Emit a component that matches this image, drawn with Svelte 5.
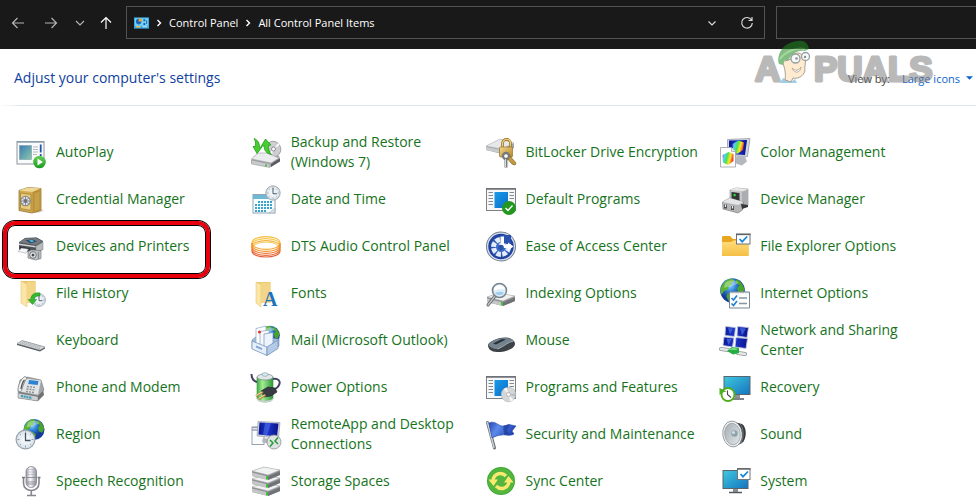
<script>
  /**
   * Control Panel — "All Control Panel Items" in the large icons view.
   */
  const items = [
    { name: 'AutoPlay', icon: 'autoplay' },
    { name: 'Backup and Restore (Windows 7)', icon: 'backup' },
    { name: 'BitLocker Drive Encryption', icon: 'bitlocker' },
    { name: 'Color Management', icon: 'color' },
    { name: 'Credential Manager', icon: 'credential' },
    { name: 'Date and Time', icon: 'date' },
    { name: 'Default Programs', icon: 'defaults' },
    { name: 'Device Manager', icon: 'device' },
    { name: 'Devices and Printers', icon: 'printer', marked: true },
    { name: 'DTS Audio Control Panel', icon: 'dts' },
    { name: 'Ease of Access Center', icon: 'ease' },
    { name: 'File Explorer Options', icon: 'explorer' },
    { name: 'File History', icon: 'history' },
    { name: 'Fonts', icon: 'fonts' },
    { name: 'Indexing Options', icon: 'indexing' },
    { name: 'Internet Options', icon: 'internet' },
    { name: 'Keyboard', icon: 'keyboard' },
    { name: 'Mail (Microsoft Outlook)', icon: 'mail' },
    { name: 'Mouse', icon: 'mouse' },
    { name: 'Network and Sharing Center', icon: 'network' },
    { name: 'Phone and Modem', icon: 'phone' },
    { name: 'Power Options', icon: 'power' },
    { name: 'Programs and Features', icon: 'programs' },
    { name: 'Recovery', icon: 'recovery' },
    { name: 'Region', icon: 'region' },
    { name: 'RemoteApp and Desktop Connections', icon: 'remote' },
    { name: 'Security and Maintenance', icon: 'security' },
    { name: 'Sound', icon: 'sound' },
    { name: 'Speech Recognition', icon: 'speech' },
    { name: 'Storage Spaces', icon: 'storage' },
    { name: 'Sync Center', icon: 'sync' },
    { name: 'System', icon: 'system' }
  ]

  let view = $state('Large icons')
  let query = $state('')
</script>

{#snippet globe(cx, cy, r)}
  <g transform="translate({cx} {cy}) scale({r / 10})">
    <circle r="10" fill="url(#g-globe)" />
    <path d="M-8-5C-6-8-3-10 0-9.600l2 2-3 1 1 2-3 1-1 3-3 1-2 3c-1-3-1-6 1-8z" fill="#5cb531" />
    <path d="M3-9c4 1 6 5 6.800 8l-2 4-3-1-1-4 2-2-3-2zM-4 2l4 1 2 2-2 4-3 0-2-4z" fill="#49a32c" />
    <path d="M-6-6C-3-9 3-9 5-6 2-4-4-3-7-2z" fill="#fff" opacity="0.35" />
  </g>
{/snippet}

{#snippet clock(cx, cy, r)}
  <g transform="translate({cx} {cy}) scale({r / 10})">
    <circle r="9.400" fill="url(#g-clock)" stroke="#9aa3ab" stroke-width="1.200" />
    <path d="M0-8v2M0 6v2M-8 0h2M6 0h2M-5.600-5.600l1 1M4.600 4.600l1 1M-5.600 5.600l1-1M4.600-4.600l1-1" stroke="#8c969e" stroke-width="0.900" />
    <path d="M0-6.500V1h5" fill="none" stroke="#3f5365" stroke-width="1.300" />
  </g>
{/snippet}

{#snippet programWindow()}
  <rect x="1.500" y="4.500" width="29" height="22" fill="#f7f7f7" stroke="#7d8186" />
  <path d="M1 5h30" stroke="#6b6f74" stroke-width="1.500" />
  <path d="M3.500 8.500h4.500M3.500 11.500h4.500M3.500 14.500h4.500M3.500 17.500h4.500M3.500 20.500h4.500M24.500 8.500h4.500M24.500 11.500h4.500M24.500 14.500h4.500" stroke="#858a90" stroke-width="1" />
  <rect x="9.500" y="8" width="13.500" height="16" fill="url(#g-azure)" />
{/snippet}

{#snippet drive(y)}
  <path d="M2 {y + 4}L14 {y}l16 3v5l-12 5L2 {y + 9}z" fill="#8d8f91" />
  <path d="M2 {y + 4}L14 {y}l16 3-12 5z" fill="#f1f2f2" stroke="#a8abad" stroke-width="0.500" />
  <path d="M2 {y + 5.5}l16 4v3.500L2 {y + 9}z" fill="#c4c6c8" />
  <path d="M18 {y + 9.5}l12-5v3.500l-12 5z" fill="#707376" />
  <path d="M16 {y + 9}l2 .5v3l-2-.5z" fill="#35c52c" />
{/snippet}

{#snippet pcWithTick()}
  <rect x="18.500" y="2.500" width="12.500" height="11" fill="#fff" stroke="#72777b" />
  <path d="M18 3h13.500" stroke="#5f6468" stroke-width="1.400" />
  <path d="m21.500 8 2.500 2.700 5-5.200" fill="none" stroke="#1686d9" stroke-width="1.700" />
{/snippet}

{#snippet picture(icon)}
  <svg class="icon" viewBox="0 0 32 32" aria-hidden="true">
    {#if icon === 'autoplay'}
      <rect x="2" y="4.500" width="27" height="22.500" fill="#fafbfc" stroke="#8e959c" />
      <path d="M2 5h27" stroke="#8fa0b0" stroke-width="1.500" />
      <rect x="4.500" y="8.500" width="12" height="14" fill="url(#g-teal)" stroke="#7c9dad" stroke-width="0.600" />
      <path d="M18 10h5M18 12.500h5M18 15h5M18 17.500h4" stroke="#b5b9bd" stroke-width="1" />
      <path d="M25.700 7.500v8M25.700 17v2" stroke="#1d58ad" stroke-width="1.800" />
      <circle cx="24.500" cy="25" r="6.300" fill="url(#g-green)" />
      <path d="M22.500 21.500v7l5.500-3.500z" fill="#fff" />
    {:else if icon === 'backup'}
      <path d="M1.500 22 8 16h17l5 4-9 10L1.500 26z" fill="#a6a9ac" />
      <ellipse cx="23.500" cy="12" rx="7.200" ry="7.800" transform="rotate(-25 23.500 12)" fill="#cfcfd3" stroke="#8e8f93" stroke-width="0.700" />
      <path d="m23.500 12 6-4-1-2zM23.500 12l-5 5 3 2z" fill="#fff" />
      <circle cx="23.500" cy="12" r="2" fill="#fff" stroke="#77797d" stroke-width="0.800" />
      <path d="M1.500 22 8 16h9l12 5-8 5z" fill="#ecedee" stroke="#9b9ea2" stroke-width="0.600" />
      <path d="M1.500 23 20 27v3.500L1.500 27z" fill="#c8cacc" stroke="#8a8d90" stroke-width="0.500" />
      <path d="m21 27 9-6v3.500L21 30z" fill="#595b5e" />
      <path d="M16 27.500v2" stroke="#21b526" stroke-width="1.500" />
      <path d="M4 1.500C8 3 9.500 6 9.500 10H12l-5 6.500L3 9.500h2.300C5.800 6 5.500 4 4 1.500z" fill="#46cf2c" stroke="#198f19" stroke-width="0.700" />
      <path d="m15.500 2 5.500 6-2.500.5c-.5 3 .5 6 3 9-5-1-7.500-4-7.300-8.500l-3 .3z" fill="#46cf2c" stroke="#198f19" stroke-width="0.700" />
    {:else if icon === 'bitlocker'}
      <path d="M1 9 15 2l14 4v5l-12 6L1 13z" fill="#a1a3a5" />
      <path d="M1 9 15 2l14 4-12 6z" fill="#e6e7e8" stroke="#b7b9bb" stroke-width="0.500" />
      <path d="m1 10 16 3v3.500L1 13z" fill="#c8cacc" />
      <path d="M17.500 12V6.500c0-5.500 8-5.500 8 0V11" fill="none" stroke="#8c6a22" stroke-width="2.600" />
      <path d="M17.500 12V6.500c0-5.500 8-5.500 8 0V11" fill="none" stroke="#edcb76" stroke-width="1.300" />
      <rect x="14.500" y="10" width="13" height="10" rx="1" fill="url(#g-gold)" stroke="#8a6519" stroke-width="0.600" />
      <path d="m24 18 7 8-1 2-3-1-6-7z" fill="#c39a3d" stroke="#80601c" stroke-width="0.700" />
      <circle cx="21" cy="19" r="3" fill="#fff" stroke="#77797b" stroke-width="2.300" />
      <path d="M21 21.500v9" stroke="#77797b" stroke-width="3" />
      <path d="M20.500 22v8M22 25h2M22 28h1.500" stroke="#d5d7d8" stroke-width="1" />
    {:else if icon === 'color'}
      <path d="m8.500 2.500 22.500-1-2.500 18-20-1z" fill="#d3d7df" stroke="#8991a4" stroke-width="0.700" />
      <path d="m10 3.500 18-.6-2 15-16-1z" fill="url(#g-screen)" />
      <path d="m13.500 7 6-3.500 5.500 2-1 7.500-6 4-4-3z" fill="url(#g-rainbow)" />
      <path d="m18 19 8 .5 2 5-5 4-9-3z" fill="#b4b8bf" />
      <path d="M1.500 10.500h11l4 4v15.500h-15z" fill="#fff" stroke="#9a9ea6" stroke-width="0.800" />
      <path d="M12.500 10.500v4h4" fill="#e7e9ec" stroke="#9a9ea6" stroke-width="0.700" />
      <path d="m3.500 18 6-3 5 2v7l-5.500 4-5-2.500z" fill="url(#g-rainbow)" />
    {:else if icon === 'credential'}
      <path d="M14 29h9l6-2-5-4z" fill="#c9c9c9" opacity="0.600" />
      <path d="m4 6.500 9-3 13 1v22L17 29 4 26.500z" fill="#d3ac51" stroke="#84651f" stroke-width="0.700" />
      <path d="m4 6.500 9-3 13 1-8.500 3.500z" fill="#efd795" />
      <path d="m17.500 8 8.500-3.500v22L17.500 29z" fill="#b98f38" />
      <path d="m19.500 9.500 5-2V25l-5 2z" fill="#c7a04a" />
      <path d="m5.500 9 10.500 1.500v16L5.500 24.500z" fill="#e8cb7d" stroke="#9f7a2b" stroke-width="0.700" />
      <circle cx="10.500" cy="17" r="5.300" fill="#808489" />
      <circle cx="10.500" cy="17" r="4.200" fill="#dfe1e3" />
      <circle cx="10.500" cy="17" r="2" fill="#7d8185" />
      <path d="M10.500 12.500v9M6 17h9M7.500 14l6 6M7.500 20l6-6" stroke="#6a6d71" stroke-width="0.700" />
    {:else if icon === 'date'}
      <rect x="3" y="10.500" width="22" height="18.500" fill="#fafdff" stroke="#93a6b5" />
      <path d="M3 11h22v4H3z" fill="#6ebad4" />
      <g fill="none" stroke="#37a5ca" stroke-width="1.900" stroke-dasharray="2 1">
        <path d="M8 18h15M5 21h18M5 24h18M5 27h12" />
      </g>
      <path d="m19 29 6-5v5z" fill="#d6dde2" stroke="#93a6b5" stroke-width="0.500" />
      {@render clock(23, 9, 7.6)}
    {:else if icon === 'defaults'}
      {@render programWindow()}
      <circle cx="24" cy="24" r="7" fill="#239620" />
      <path d="m20.500 24 2.500 2.500 4.500-5" fill="none" stroke="#fff" stroke-width="1.400" />
    {:else if icon === 'device'}
      <path d="m11 6 6-2 12 1v16l-6 3-12-4z" fill="#c6c8ca" stroke="#8b8d90" stroke-width="0.600" />
      <path d="m11 6 6-2 12 1-5 2z" fill="#e9eaea" />
      <path d="m12.500 8 8 1v8l-8-2z" fill="#313335" />
      <path d="m23 8 6-2.500V21l-6 2.500z" fill="#abadb0" />
      <rect x="14.500" y="10" width="2.200" height="2.200" fill="#26df37" />
      <path d="m3.500 18 7-4 14 4-1 8-4.500 3-15-4z" fill="#b3b5b7" stroke="#727476" stroke-width="0.600" />
      <path d="m3.500 18 7-4 14 4-5.500 3z" fill="#e4e5e6" />
      <path d="M6.500 20.500v4M13.500 22v4" stroke="#4d4f51" stroke-width="3" />
      <path d="M6.500 20.500v2.500M13.500 22v2.500" stroke="#eee" stroke-width="1.200" />
      <path d="m22 20 7 1v2l-6 2z" fill="#343638" />
    {:else if icon === 'printer'}
      <path d="m4 12 6-4.500 12-.7 6 3.700v8L21 22 4 19z" fill="#4d5257" />
      <path d="m4 11.500 6-4.200 11-.6 7 3.600-7 4.200z" fill="#757b80" stroke="#4c5155" stroke-width="0.600" />
      <path d="m10.500 9.300 7-.9 4.500 2-6.500 1.800z" fill="#27455c" />
      <path d="m13.500 9.600 3.500-.5 2.500 1.200-3 .9z" fill="#54b8e6" />
      <path d="m21 15 7-4v7.500L21 21z" fill="#b6babd" stroke="#7d8185" stroke-width="0.500" />
      <path d="m4 12.500 16.500 2.500v1.500L4 14z" fill="#d4d7d9" />
      <path d="m5 15.500 10 2v3.500L5 19z" fill="#26292c" />
      <path d="m6.500 17 7 1.200-2.500 4-8-1.700z" fill="#f4f5f6" stroke="#989da1" stroke-width="0.500" />
      <path d="m13 20.500 3-1.500h3l7 1v7.500L21 29l-8-2z" fill="#c3c6c9" stroke="#65696d" stroke-width="0.600" />
      <circle cx="18" cy="24" r="3.300" fill="#f1f2f3" stroke="#5d6165" stroke-width="0.900" />
      <circle cx="18" cy="24" r="1.500" fill="#45494d" />
      <path d="M23.500 21v7" stroke="#8a8e91" stroke-width="1.500" />
    {:else if icon === 'dts'}
      <g fill="none" stroke-width="1.200">
        <path d="M2 12c0-8.500 28-8.500 28 0" stroke="#f6bc3a" />
        <path d="M2 14c0-8.500 28-8.500 28 0" stroke="#f8c74c" />
        <path d="M2 16c0-8.500 28-8.500 28 0" stroke="#f5b13b" />
        <path d="M3 16.500c2-7 24-7 26 0" stroke="#f8cd6c" />
        <path d="M2 12c0 8.500 28 8.500 28 0" stroke="#f4ab35" />
        <path d="M2 14c0 8.500 28 8.500 28 0" stroke="#f09535" />
        <path d="M2 16c0 8.500 28 8.500 28 0" stroke="#ed7e38" />
        <path d="M2 18c0 8.500 28 8.500 28 0" stroke="#ea6b38" />
        <path d="M2 20c0 8 28 8 28 0" stroke="#e65b38" />
        <path d="M2 12v8M30 12v8" stroke="#ef8d32" />
      </g>
    {:else if icon === 'ease'}
      <circle cx="16" cy="15.500" r="15" fill="#727d91" />
      <circle cx="16" cy="15.500" r="14" fill="#d7dfec" />
      <circle cx="16" cy="15.500" r="12.700" fill="url(#g-ease)" />
      <circle cx="16" cy="16" r="7.500" fill="none" stroke="#e4ecfb" stroke-width="5" stroke-dasharray="4.500 1.400" />
      <path d="M16.500 4H26v9H16.500z" fill="#2952af" />
      <path d="M15.500 5.500h3.500v7h2l-3.700 4.500-3.800-4.500h2z" fill="#fff" />
      <path d="M18 14h5v-2.500l5.500 4-5.500 4V17h-5z" fill="#fff" />
      <circle cx="16" cy="16.500" r="2.800" fill="#2952af" />
    {:else if icon === 'explorer'}
      <path d="M3 6.500c0-1 .5-1.500 1.500-1.500H11l3 3h14c1 0 1.500.5 1.500 1.500V24c0 .700-.5 1-1 1H4c-.6 0-1-.4-1-1z" fill="#e8a620" />
      <path d="M3 11h9l2.500-1.500H29.500V24c0 .6-.4 1-1 1H4c-.6 0-1-.4-1-1z" fill="url(#g-folder)" />
      <rect x="17.500" y="3" width="13.500" height="10" fill="#fff" stroke="#6f757b" />
      <path d="M17 3.500h14.500" stroke="#5f6468" stroke-width="1.300" />
      <path d="m20.500 8 2.700 2.700 5-5.200" fill="none" stroke="#1686d9" stroke-width="1.700" />
    {:else if icon === 'history'}
      <path d="M6 3h14.500v22H6z" fill="#e9c66b" />
      <path d="m6 3 6 3v23l-6-4z" fill="#fbe6a5" stroke="#dfbf69" stroke-width="0.500" />
      <path d="M12 4h8.500v21H12z" fill="#f2d586" />
      {@render clock(24, 22, 6.8)}
      <path d="M25 15c-6-1-9 2-9.300 6.500h-2.500l4.300 5 4-5h-2.300c.3-2.500 2.300-4 5.800-3.500z" fill="#35b933" stroke="#14861c" stroke-width="0.500" />
    {:else if icon === 'fonts'}
      <path d="M6 4h14.500v21H6z" fill="#ecca72" />
      <path d="m6 4 5 2.500V29l-5-4z" fill="#fbe6a5" stroke="#dfbf69" stroke-width="0.500" />
      <path d="M11 5h9.500v20H11z" fill="#f2d586" />
      <text x="13" y="28" class="font-letter">A</text>
    {:else if icon === 'indexing'}
      {@render drive(15)}
      <path d="m10 18-7 9" stroke="#5b6166" stroke-width="3" stroke-linecap="round" />
      <path d="m10 18-7 9" stroke="#c5cacd" stroke-width="1.300" stroke-linecap="round" />
      <circle cx="14.500" cy="12.500" r="7" fill="#d9ecfa" fill-opacity="0.900" stroke="#7b8389" stroke-width="1.600" />
      <path d="M9 11c2-5 9-5 11 0-3 1-7-1-11 2z" fill="#fff" />
      <path d="M10 15c2 3 7 3 9 0-3-2-6-1-9 0z" fill="#a3cdec" />
    {:else if icon === 'internet'}
      {@render globe(13.500, 12.500, 12.300)}
      <path d="M10.500 14h20v16h-20z" fill="#fcfdfd" stroke="#7b8690" />
      <path d="M11 14.500h19" stroke="#a8b2ba" stroke-width="1.500" stroke-dasharray="1.500 1" />
      <path d="M20 20h8M20 25.500h8" stroke="#8995a0" stroke-width="1.300" />
      <path d="m12.500 20 2 2 3.500-4.500M12.500 25.500l2 2L18 23" fill="none" stroke="#207fd0" stroke-width="1.600" />
    {:else if icon === 'keyboard'}
      <path d="m2 18.500 5-3 23 6.500v1.500L25 26.500 2 20z" fill="#52575b" />
      <path d="m2 18.500 5-3 23 6.500-5 3z" fill="#d9dcde" stroke="#9ba0a4" stroke-width="0.500" />
      <path d="m5 18 20 5.500M6.500 17 26 22.300M8 16l20 5.500" stroke="#9a9fa4" stroke-width="0.800" stroke-dasharray="1.500 0.700" />
    {:else if icon === 'mail'}
      {@render globe(20, 10.500, 9.800)}
      <path d="m2 15 5-4 22 3v7l-12 9L2 23z" fill="#a4bddc" stroke="#6282ac" stroke-width="0.500" />
      <path d="M6 3.500 16 1v17L6 20z" fill="#fff" stroke="#8aa5c7" stroke-width="0.700" />
      <path d="m10 6.500 9-1.500v16l-9 1z" fill="#f6f9fd" stroke="#8aa5c7" stroke-width="0.700" />
      <path d="m14 9 9-1.500V22l-9 1z" fill="#eef4fb" stroke="#7893b8" stroke-width="0.700" />
      <circle cx="9.500" cy="7" r="1.600" fill="#e33a2c" />
      <path d="m2 16 15 6v8.500L2 24z" fill="#e5effa" stroke="#6989b4" stroke-width="0.700" />
      <path d="m17 22 11-7v8.500L17 30.500z" fill="#b4cbe7" stroke="#6989b4" stroke-width="0.700" />
      <path d="m6 20.500 6 2.500v2l-6-2.500z" fill="#7fa4d5" />
    {:else if icon === 'mouse'}
      <path d="M3 20c0-3 10-8 18-7.500 5 .3 9 3 9 6.500 0 4-8 8-18 8-6 0-9-3-9-7z" fill="#3d4247" />
      <path d="M3.500 19.500c1-3 10-7 17.500-6.500 4 .3 7 1.500 7.500 3-5 0-9 5-16 8-4 0-9-2-9-4.500z" fill="#75838f" />
      <path d="m8 18.500 9-4.500 4 .500-10 5z" fill="#29323b" />
      <path d="M12.500 24c6-2 10-7 16-8" stroke="#cbd4dc" stroke-width="0.700" fill="none" />
    {:else if icon === 'network'}
      <g fill="url(#g-screen)" stroke="#bdc6db" stroke-width="0.900">
        <path d="m6.500 1.500 10 1-1 9-9.500-1zM18.500 1.500l11 1-1.500 10-10-1.500zM5 12l10 1-1.500 9-9.500-1.500zM17 12.500l11.500 1-1.500 10-11-1.500z" />
      </g>
      <path d="m9 3 5 .5-3 6zM21 3l6 .5-4 7zM7.500 13.500l5 .5-3 6z" fill="#5d80ee" opacity="0.600" />
      <path d="m2 24 7 1M19 28l7 1" stroke="#8f9698" stroke-width="4" stroke-linecap="round" />
      <path d="m2 24 7 1M19 28l7 1" stroke="#e3e8e6" stroke-width="2.500" stroke-linecap="round" />
      <path d="m8 26 5-4 7 1v5l-6 1.500z" fill="#28ad45" />
      <path d="m10 25 4-2.500 5 1.500-2 1z" fill="#75dc82" />
    {:else if icon === 'phone'}
      <path d="m3 21 4-5 21 1 1 6-6 6-20-3z" fill="#6f7376" />
      <path d="m3 21 20 3.500V29L3 26z" fill="#ced0d2" stroke="#777" stroke-width="0.500" />
      <path d="m6 24 11 2" stroke="#319ab8" stroke-width="2" stroke-dasharray="2 0.700" />
      <path d="m5 8 7-3 14 3 3 10-6 6-20-4z" fill="#a4a7aa" stroke="#74787b" stroke-width="0.600" />
      <path d="m9 6.500 17 2-3 14-18-3z" fill="#e2e4e5" />
      <path d="m14 8 9.500 1-.8 4-9.500-1z" fill="#2d83d2" />
      <path d="m12 14.500 9 1M11.500 17l9 1M11 19.500l8 1" stroke="#8b8f93" stroke-width="1.400" stroke-dasharray="2 1" />
      <path d="M10 4.500c-3 1-7 8-7 13 0 2 2 3 3.500 1C8 14 9 10 12 6z" fill="#eff0f1" stroke="#777b7e" stroke-width="0.800" />
      <path d="M9.500 8c-2 2-3 6-3.500 9" stroke="#55595c" fill="none" stroke-width="1.400" />
    {:else if icon === 'power'}
      <path d="M7 5v22c2 4 14 4 16 0V5z" fill="url(#g-battery)" stroke="#3c963d" stroke-width="0.600" />
      <ellipse cx="15" cy="5" rx="8" ry="3" fill="#e2e7e9" stroke="#798589" stroke-width="0.700" />
      <ellipse cx="15" cy="2.500" rx="3" ry="1.800" fill="#d2edf7" stroke="#84959d" stroke-width="0.600" />
      <path d="M7 26c2 3.500 14 3.500 16 0v2c-2 3-14 3-16 0z" fill="#c9d0cf" />
      <path d="M1.500 2c0 5 2 7 5.500 8M23 7c5-1 8 2 6 6-1 3-4 4-6 5" fill="none" stroke="#434267" stroke-width="2" />
      <path d="m11 19 7-4 7 1 2 4-6 4-7 1z" fill="#393b43" stroke="#1d1e23" stroke-width="0.600" />
      <path d="m13 20-7 4M15.500 23l-7 4" stroke="#ad8e4b" stroke-width="2.500" />
      <path d="m12 20-6 3.500M14.500 23l-6 3.500" stroke="#f3e3ac" stroke-width="1" />
    {:else if icon === 'programs'}
      {@render programWindow()}
      <circle cx="23.500" cy="22.500" r="7.300" fill="#d4d6d8" stroke="#a3a6a9" stroke-width="0.500" />
      <path d="m23.500 22.500-5-5.500 3-1.500zM23.500 22.500l5 5.500-3 1.500z" fill="#f8f8f8" />
      <path d="m23.500 22.500 7-1v3z" fill="#b9bcbf" />
      <circle cx="23.500" cy="22.500" r="2" fill="#fff" stroke="#9b9ea1" stroke-width="0.700" />
    {:else if icon === 'recovery'}
      <rect x="5" y="4.500" width="26" height="18" fill="url(#g-monitor)" stroke="#5c646b" />
      <path d="M16 23h5v3h-5z" fill="#8b9095" />
      <path d="M13 27h12" stroke="#55595e" stroke-width="1.500" />
      <circle cx="9" cy="22.500" r="6.500" fill="#fff" stroke="#51ae21" stroke-width="2" />
      <path d="M.5 16v7l3-2.500 4-1z" fill="#51ae21" />
      <path d="M8.500 18.500v4l3.500 3" fill="none" stroke="#44494d" stroke-width="1.100" />
    {:else if icon === 'region'}
      {@render globe(19, 10.500, 10.500)}
      {@render clock(10.500, 20.500, 10)}
    {:else if icon === 'remote'}
      <rect x="2" y="8" width="12" height="17.500" fill="#fbfcfd" stroke="#9aa3ac" />
      <path d="M2 8.500h12M2 11h8" stroke="#99a4b4" stroke-width="1.500" />
      <path d="m8 2.500 22 1L28.500 19 7 17z" fill="#cfd3da" stroke="#9096a1" stroke-width="0.600" />
      <path d="m9.500 3.500 19 1L27 17.500l-18.500-2z" fill="url(#g-screen)" />
      <path d="m15 4 6 .3-4 12-4-.5z" fill="#4d70e7" opacity="0.600" />
      <path d="m13 19 7 1-1 5-7-2z" fill="#b2b7bd" />
      <circle cx="24" cy="23" r="7" fill="#dfe2e3" stroke="#8a9094" stroke-width="0.800" />
      <path d="m20 21 3 3-3 3.500M28 18.500 25 22l3 3" fill="none" stroke="#249c36" stroke-width="1.500" />
    {:else if icon === 'security'}
      <path d="m2.500 3.500 7 25.500" stroke="#6b7075" stroke-width="3" stroke-linecap="round" />
      <path d="M2.500 3.500 9 28.500" stroke="#d3d7da" stroke-width="1.300" stroke-linecap="round" />
      <path d="M4 4c6-3 9 3 14 3 3 0 4-1.500 6-1.500l7 1.500-4 5 2 3c-6 3-8 0-12 1-3 0-6 1-10 3z" fill="url(#g-flag)" stroke="#2345a4" stroke-width="0.600" />
      <path d="M19 6.500c-2 4 1 6 0 9.500l5-.5-2-4 3-6z" fill="#17338d" opacity="0.600" />
    {:else if icon === 'sound'}
      <path d="m15 3 8 2c5 3 5 15 0 19l-8 4z" fill="#35383b" />
      <path d="M21 5c4 3 4 14 1 19" fill="none" stroke="#73777b" stroke-width="1" />
      <ellipse cx="13.500" cy="15" rx="9.700" ry="13" transform="rotate(-7 13.500 15)" fill="#eff0f1" stroke="#777c80" stroke-width="0.700" />
      <ellipse cx="13.500" cy="15" rx="7.800" ry="10.800" transform="rotate(-7 13.500 15)" fill="url(#g-speaker)" stroke="#969ca1" stroke-width="0.700" />
      <circle cx="15.500" cy="14.500" r="3.200" fill="#8da3ae" />
      <circle cx="14.500" cy="13.500" r="1.500" fill="#d4e0e6" />
    {:else if icon === 'speech'}
      <path d="M8.500 11v6c0 10 15.500 10 15.500 0v-6M16.300 25v4M12 29.500h9" fill="none" stroke="#86868f" stroke-width="1.600" />
      <rect x="11" y="0.500" width="10.500" height="21" rx="5.200" fill="url(#g-mic)" stroke="#777780" stroke-width="0.700" />
      <path d="M11 11.500h10.500M12 16h8.500M12 18h8" stroke="#83838c" stroke-width="0.800" />
      <path d="M12 3.500h8M11.500 6h9.500M11.500 8.500h9.500" stroke="#a5a5b2" stroke-width="0.500" />
      <path d="M7 11.500h3M22.500 11.500h3" stroke="#777780" stroke-width="1.500" />
    {:else if icon === 'storage'}
      {@render drive(17)}
      {@render drive(9)}
      {@render drive(1)}
    {:else if icon === 'sync'}
      <circle cx="16" cy="15" r="14" fill="#3ea935" />
      <circle cx="16" cy="15" r="13" fill="#54b63e" />
      <path d="M8 14c1-6 8-9 13-4" fill="none" stroke="#fae96f" stroke-width="3.400" />
      <path d="M24 16c-1 6-8 9-13 4" fill="none" stroke="#fae96f" stroke-width="3.400" />
      <path d="M3.500 13.500h9.500l-4.500 6.500zM28.500 16.500H19l4.500-6.500z" fill="#fae96f" />
    {:else if icon === 'system'}
      <rect x="4" y="4.500" width="25" height="18" fill="url(#g-monitor)" stroke="#5c646b" />
      <path d="M14 23h5v3h-5z" fill="#8b9095" />
      <path d="M10 26.500h13" stroke="#55595e" stroke-width="1.500" />
      {@render pcWithTick()}
    {/if}
  </svg>
{/snippet}

<svg class="defs" aria-hidden="true">
  <defs>
    <radialGradient id="g-globe" cx="0.400" cy="0.300">
      <stop offset="0" stop-color="#8fdcff" />
      <stop offset="0.500" stop-color="#2d7ed6" />
      <stop offset="1" stop-color="#143a99" />
    </radialGradient>
    <radialGradient id="g-clock">
      <stop offset="0" stop-color="#fff" />
      <stop offset="1" stop-color="#d5e0e8" />
    </radialGradient>
    <linearGradient id="g-azure" x2="1" y2="1">
      <stop stop-color="#1a9be8" />
      <stop offset="1" stop-color="#0b6ecb" />
    </linearGradient>
    <linearGradient id="g-teal" x2="1" y2="1">
      <stop stop-color="#3a7ab5" />
      <stop offset="1" stop-color="#8cc9a8" />
    </linearGradient>
    <linearGradient id="g-green" x2="0" y2="1">
      <stop stop-color="#67cf55" />
      <stop offset="1" stop-color="#1b9b20" />
    </linearGradient>
    <linearGradient id="g-gold" x2="1" y2="1">
      <stop stop-color="#f3d98c" />
      <stop offset="1" stop-color="#b58226" />
    </linearGradient>
    <linearGradient id="g-screen" x2="1">
      <stop stop-color="#0b1693" />
      <stop offset="0.450" stop-color="#1c36ca" />
      <stop offset="1" stop-color="#0a128b" />
    </linearGradient>
    <linearGradient id="g-rainbow" x2="1" y2="0.300">
      <stop stop-color="#f02fd0" />
      <stop offset="0.250" stop-color="#46d6f2" />
      <stop offset="0.500" stop-color="#4fe04d" />
      <stop offset="0.750" stop-color="#fbea29" />
      <stop offset="1" stop-color="#f0402a" />
    </linearGradient>
    <radialGradient id="g-ease">
      <stop offset="0" stop-color="#4c83dc" />
      <stop offset="1" stop-color="#1b3b98" />
    </radialGradient>
    <linearGradient id="g-folder" x2="0" y2="1">
      <stop stop-color="#ffdd7c" />
      <stop offset="1" stop-color="#f5bf45" />
    </linearGradient>
    <linearGradient id="g-battery" x2="1">
      <stop stop-color="#3fae45" />
      <stop offset="0.350" stop-color="#a5ec92" />
      <stop offset="1" stop-color="#2b9738" />
    </linearGradient>
    <linearGradient id="g-monitor" x2="1" y2="1">
      <stop stop-color="#3ec9dd" />
      <stop offset="1" stop-color="#1573c0" />
    </linearGradient>
    <linearGradient id="g-flag" x2="1" y2="0.400">
      <stop stop-color="#2747b8" />
      <stop offset="0.400" stop-color="#5d8bea" />
      <stop offset="1" stop-color="#2042b5" />
    </linearGradient>
    <linearGradient id="g-speaker" x2="1" y2="1">
      <stop stop-color="#a4acb1" />
      <stop offset="1" stop-color="#e3e9ec" />
    </linearGradient>
    <linearGradient id="g-mic" x2="1">
      <stop stop-color="#9898a6" />
      <stop offset="0.400" stop-color="#fbfbff" />
      <stop offset="1" stop-color="#90909d" />
    </linearGradient>
  </defs>
</svg>

<div class="window">
  <header class="toolbar">
    <nav class="history" aria-label="History">
      <button aria-label="Back" class="dim">
        <svg viewBox="0 0 14 14"><path d="M13 7H1.500M6.500 2l-5 5 5 5" /></svg>
      </button>
      <button aria-label="Forward" class="dim">
        <svg viewBox="0 0 14 14"><path d="M1 7h11.500M7.500 2l5 5-5 5" /></svg>
      </button>
      <button aria-label="Recent locations" class="dim narrow">
        <svg viewBox="0 0 14 14"><path d="m3 5 4 4 4-4" /></svg>
      </button>
      <button aria-label="Up" class="narrow">
        <svg viewBox="0 0 14 14"><path d="M7 13V1.500M2 6.500l5-5 5 5" /></svg>
      </button>
    </nav>

    <div class="address">
      <svg class="panel-icon" viewBox="0 0 16 12" aria-hidden="true">
        <path d="M0 0h16v12H0z" fill="#35a8e6" />
        <path d="M1 1h14v8H1z" fill="#79d1f7" />
        <circle cx="5" cy="4.500" r="3" fill="#1a66b8" />
        <path d="M5 4.500v-3.500a3.500 3.500 0 0 1 3.500 3.500z" fill="#f6a528" />
        <path d="M10 2h2v2h-2zM13 3h1v4h-1zM10 6h2v2h-2z" fill="#1763ae" />
        <path d="M2 10h5" stroke="#f6bd43" stroke-width="1.500" />
        <path d="M9 10h5" stroke="#d8f2ff" stroke-width="1" />
      </svg>
      <svg class="crumb-arrow" viewBox="0 0 6 8" aria-hidden="true"><path d="m1.500 1 3 3-3 3" /></svg>
      <a href="#control-panel">Control Panel</a>
      <svg class="crumb-arrow" viewBox="0 0 6 8" aria-hidden="true"><path d="m1.500 1 3 3-3 3" /></svg>
      <a href="#all-items">All Control Panel Items</a>
      <div class="address-actions">
        <button aria-label="Previous locations">
          <svg viewBox="0 0 14 14"><path d="m3.500 5.500 3.500 3.500 3.500-3.500" /></svg>
        </button>
        <button aria-label="Refresh">
          <svg viewBox="0 0 14 14"><path d="M11.500 4A5.300 5.300 0 1 0 12.300 7M12 1v3.500H8.500" /></svg>
        </button>
      </div>
    </div>

    <input class="search" type="search" aria-label="Search Control Panel" bind:value={query} />
  </header>

  <section class="heading">
    <h1>Adjust your computer's settings</h1>
    <div class="view-by">
      <label for="view">View by:</label>
      <select id="view" bind:value={view}>
        <option>Category</option>
        <option>Large icons</option>
        <option>Small icons</option>
      </select>
      <svg class="caret" viewBox="0 0 8 4" aria-hidden="true"><path d="M0 0h8L4 4z" /></svg>
    </div>

    <svg class="watermark" viewBox="0 0 186 54" aria-hidden="true">
      <g class="letters">
        <text x="3" y="42">A</text>
        <text x="62" y="42">PUALS</text>
      </g>
      <path d="m28 44 3-5 8 4 4-3 2 4z" fill="#4fa9d3" />
      <path d="M30 22c4-4 11-8 17-8l7 4-1 9c-1 3 1 4-1 7-2 4-7 6-11 5l-2 4-6-2c1-6 0-12-3-19z" fill="#ffdca8" stroke="#5d5142" stroke-width="1" />
      <path d="M27 25c-3-9 4-22 19-23 6-1 10 2 11 8-1 1-3 1-4 2-9-1-14 4-17 10l-3-1-2 5z" fill="#1d8a20" />
      <path d="M28 20c4-6 14-12 25-10" fill="none" stroke="#5fb64e" stroke-width="2" />
      <g fill="#eef6fa" stroke="#484d52" stroke-width="1.300">
        <circle cx="43.500" cy="19.500" r="4.500" />
        <circle cx="53.500" cy="17.500" r="4" />
      </g>
      <path d="M39 20l-6 2" stroke="#484d52" />
      <circle cx="44.500" cy="19.500" r="1.300" fill="#333" />
      <circle cx="53" cy="18" r="1.200" fill="#333" />
      <path d="M40 29c3 3 7 3 9-1 0 5-6 8-9 1z" fill="#fff" stroke="#6e4a38" stroke-width="0.800" />
    </svg>
  </section>

  <ul class="items">
    {#each items as item (item.icon)}
      <li class:marked={item.marked}>
        <a href="#{item.icon}">
          {@render picture(item.icon)}
          <span>{item.name}</span>
        </a>
      </li>
    {/each}
  </ul>
</div>

<style>
  :global(body) {
    margin: 0;
    background: #fff;
  }

  .defs {
    position: absolute;
    width: 0;
    height: 0;
  }

  .window {
    height: 100vh;
    overflow: hidden;
    font-family: 'Segoe UI', 'Open Sans', 'Noto Sans', sans-serif;
  }

  .toolbar {
    display: flex;
    align-items: flex-start;
    box-sizing: border-box;
    height: 49px;
    padding-top: 6px;
    background: #191919;
  }

  button {
    display: flex;
    align-items: center;
    justify-content: center;
    padding: 0;
    border: 0;
    background: none;
    color: #fff;
  }

  button svg {
    width: 14px;
    height: 14px;
    fill: none;
    stroke: currentColor;
    stroke-width: 1.2;
  }

  .history {
    display: flex;
    align-items: center;
    height: 33px;
    padding: 0 7px 0 1px;
  }

  .history button {
    width: 33px;
    height: 33px;
  }

  .history .narrow {
    width: 26px;
  }

  .history .dim {
    color: #b4b4b4;
  }

  .address {
    display: flex;
    flex: 1;
    align-items: center;
    box-sizing: border-box;
    height: 33px;
    padding-left: 7px;
    border: 1px solid #535353;
    font-size: 11px;
  }

  .address a {
    padding-bottom: 1px;
    color: #fff;
    text-decoration: none;
    white-space: nowrap;
  }

  .panel-icon {
    width: 15px;
    height: 12px;
  }

  .crumb-arrow {
    width: 6px;
    height: 8px;
    margin: 0 7px;
    fill: none;
    stroke: #fff;
    stroke-width: 1.4;
  }

  .address-actions {
    display: flex;
    margin-left: auto;
  }

  .address-actions button {
    width: 35px;
    height: 31px;
    color: #d8d8d8;
  }

  .search {
    box-sizing: border-box;
    width: 200px;
    height: 33px;
    margin: 0 0 0 11px;
    padding: 0 10px;
    border: 1px solid #535353;
    border-right: 0;
    border-radius: 0;
    background: #191919;
    color: #fff;
    font: inherit;
    font-size: 11px;
    outline: none;
  }

  .heading {
    position: relative;
    display: flex;
    align-items: center;
    justify-content: space-between;
    height: 56px;
    padding: 0 3px 0 14px;
    border-bottom: 1px solid;
    border-image: linear-gradient(to right, #fff, #dbe5ed 24px) 1;
  }

  h1 {
    margin: 0;
    color: #103f9e;
    font-size: 14px;
    font-weight: 400;
  }

  .view-by {
    display: flex;
    align-items: center;
    padding-top: 3px;
    color: #444;
    font-size: 11px;
  }

  .view-by select {
    margin: 0 5px 0 12px;
    padding: 0;
    border: 0;
    appearance: none;
    background: none;
    color: #0a63cc;
    font: inherit;
  }

  .caret {
    width: 7px;
    height: 4px;
    margin-top: -2px;
    fill: #0a63cc;
  }

  /* Site mark, laid over the toolbar edge and the view switch */
  .watermark {
    position: absolute;
    top: -10px;
    right: 38px;
    width: 186px;
    height: 54px;
    opacity: 0.55;
    pointer-events: none;
  }

  .letters {
    fill: #808080;
    stroke: #808080;
    stroke-width: 3;
    stroke-linejoin: round;
    font-family: 'Liberation Sans', sans-serif;
    font-size: 35px;
    font-weight: 700;
  }

  .items {
    display: grid;
    grid-template-columns: repeat(4, minmax(0, 1fr));
    grid-auto-rows: 47px;
    margin: 0;
    padding: 22px 22px 0 15px;
    list-style: none;
  }

  .items li {
    position: relative;
    display: flex;
  }

  .items a {
    display: flex;
    flex: 1;
    align-items: center;
    gap: 9px;
    padding-right: 12px;
    color: #16731c;
    font-size: 14px;
    line-height: 20px;
    text-decoration: none;
  }

  .items a:hover span {
    text-decoration: underline;
  }

  .icon {
    flex: none;
    width: 32px;
    height: 32px;
    margin-top: 3px;
  }

  .font-letter {
    fill: #1b73bd;
    font-family: 'Liberation Serif', serif;
    font-size: 20px;
    font-weight: 700;
  }

  .marked::after {
    content: '';
    position: absolute;
    inset: -1px 40px -9px -12px;
    border: 4px solid #e8000c;
    border-radius: 12px;
    box-shadow: 0 0 0 1px #000, inset 0 0 0 1px #000;
    pointer-events: none;
    z-index: 1;
  }
</style>
